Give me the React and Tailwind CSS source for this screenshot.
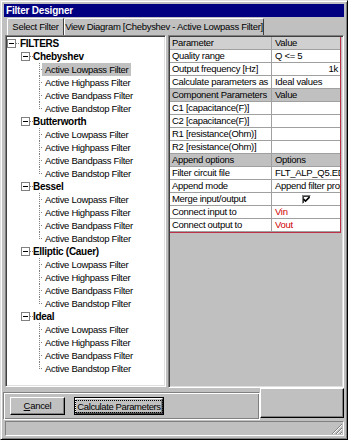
import React from "react";

const groups = ["Chebyshev", "Butterworth", "Bessel", "Elliptic (Cauer)", "Ideal"];
const leaves = ["Active Lowpass Filter", "Active Highpass Filter", "Active Bandpass Filter", "Active Bandstop Filter"];

const rows = [
  { k: "Parameter", v: "Value", head: "top" },
  { k: "Quality range", v: "Q <= 5" },
  { k: "Output frequency [Hz]", v: "1k", right: true },
  { k: "Calculate parameters as", v: "Ideal values" },
  { k: "Component Parameters", v: "Value", head: "sec" },
  { k: "C1 [capacitance(F)]", v: "" },
  { k: "C2 [capacitance(F)]", v: "" },
  { k: "R1 [resistance(Ohm)]", v: "" },
  { k: "R2 [resistance(Ohm)]", v: "" },
  { k: "Append options", v: "Options", head: "sec" },
  { k: "Filter circuit file", v: "FLT_ALP_Q5.EDF" },
  { k: "Append mode", v: "Append filter properties" },
  { k: "Merge input/output", check: true },
  { k: "Connect input to", v: "Vin", red: true },
  { k: "Connect output to", v: "Vout", red: true },
];

function Box() {
  return (
    <span className="flex h-[9px] w-[9px] shrink-0 items-center justify-center border border-[#808080] bg-white">
      <span className="h-px w-[5px] bg-black" />
    </span>
  );
}

function Leaf({ label, last, selected }) {
  return (
    <div className="relative flex h-[13px] items-center pl-[3px]">
      <span className={"absolute left-0 top-0 border-l border-dotted border-[#808080] " + (last ? "h-[7px]" : "h-full")} />
      <span className="absolute left-0 top-[6px] w-[3px] border-t border-dotted border-[#808080]" />
      <span className={"px-[3px] leading-[13px] " + (selected ? "bg-[#c0c0c0]" : "")}>{label}</span>
    </div>
  );
}

function Tree() {
  return (
    <div className="pt-px">
      <div className="flex h-[13px] items-center">
        <Box />
        <span className="w-[3px] border-t border-dotted border-[#808080]" />
        <span className="pl-px font-bold text-[10px]">FILTERS</span>
      </div>
      {groups.map((g, gi) => (
        <div key={g}>
          <div className="flex h-[13px] items-center pl-[14px]">
            <Box />
            <span className="w-[3px] border-t border-dotted border-[#808080]" />
            <span className="font-bold text-[10px]">{g}</span>
          </div>
          <div className="ml-[32px]">
            {leaves.map((l, li) => (
              <Leaf key={l} label={l} last={li === 3} selected={gi === 0 && li === 0} />
            ))}
          </div>
        </div>
      ))}
    </div>
  );
}

function Grid() {
  return (
    <div className="w-[171px] border-r border-b border-[#c03048]">
      {rows.map((r) => {
        const bg = r.head === "top" ? "bg-[#d0d0d0]" : r.head === "sec" ? "bg-[#c0c0c0]" : "bg-white";
        return (
          <div key={r.k} className={"flex h-[13px] border-b border-[#a0a0a0] leading-[12px] " + bg}>
            <div className="w-[102px] shrink-0 overflow-hidden whitespace-nowrap border-r border-[#a0a0a0] pl-[2px]">{r.k}</div>
            <div
              className={
                "flex-1 overflow-hidden whitespace-nowrap pl-[3px] pr-[2px] " +
                (r.right ? "text-right " : "") +
                (r.red ? "text-[#d00000]" : "")
              }
            >
              {r.check ? (
                <div className="flex h-full items-center justify-center">
                  <span className="flex h-[9px] w-[9px] items-center justify-center border-t border-l border-[#808080] border-r border-b border-r-white border-b-white bg-white shadow-[inset_1px_1px_0_#404040]">
                    <svg width="7" height="7" viewBox="0 0 7 7">
                      <path d="M0.5 3 L2.5 5 L6.5 1" stroke="#000" strokeWidth="1.6" fill="none" />
                    </svg>
                  </span>
                </div>
              ) : (
                r.v
              )}
            </div>
          </div>
        );
      })}
    </div>
  );
}

export default function App() {
  return (
    <div className="h-[440px] w-[348px] border border-t-[#dfdfdf] border-l-[#dfdfdf] border-r-black border-b-black bg-[#c0c0c0] px-[3px] pt-[3px] font-['Liberation_Sans',Arial,sans-serif] text-[9.5px] tracking-[-0.3px] text-black shadow-[inset_1px_1px_0_#fff,inset_-1px_-1px_0_#808080]">
      <div className="flex h-[13px] items-center bg-[#000080] pl-[2px] text-[10px] font-bold tracking-[-0.2px] text-white">
        Filter Designer
      </div>

      <div className="flex h-[18px] items-end pl-[3px]">
        <div className="flex h-[17px] w-[57px] items-center justify-center rounded-tl-[2px] border-t border-l border-white border-r border-r-[#404040]">
          Select Filter
        </div>
        <div className="flex h-[17px] w-[200px] items-center justify-center rounded-t-[2px] border-t border-l border-white border-r border-r-[#404040]">
          View Diagram [Chebyshev - Active Lowpass Filter]
        </div>
      </div>

      <div className="flex h-[353px] gap-[2px]">
        <div className="ml-px h-[352px] w-[161px] overflow-hidden border border-t-[#808080] border-l-[#808080] border-r-white border-b-white bg-white pl-px shadow-[inset_1px_1px_0_#404040,inset_-1px_-1px_0_#dfdfdf]">
          <Tree />
        </div>
        <div className="h-[353px] w-[176px] border border-t-[#808080] border-l-[#808080] border-r-white border-b-white p-px shadow-[inset_1px_1px_0_#404040,inset_-1px_-1px_0_#dfdfdf]">
          <Grid />
        </div>
      </div>

      <div className="-ml-px flex h-[32px]">
        <div className="mt-[4px] flex h-[28px] w-[257px] items-start gap-[9px] border border-t-[#808080] border-l-[#808080] border-r-white border-b-white pl-[6px] pt-[4px] shadow-[inset_1px_1px_0_#fff,inset_-1px_-1px_0_#808080]">
          <button className="flex h-[18px] w-[55px] items-center justify-center border border-t-white border-l-white border-r-black border-b-black bg-[#c0c0c0] shadow-[inset_-1px_-1px_0_#808080]">
            <span>
              <span className="underline">C</span>ancel
            </span>
          </button>
          <button className="flex h-[18px] w-[90px] items-center justify-center border border-black bg-[#c0c0c0] p-0">
            <span className="flex h-full w-full items-center justify-center border border-t-white border-l-white border-r-[#404040] border-b-[#404040] shadow-[inset_-1px_-1px_0_#808080]">
              <span className="whitespace-nowrap border border-dotted border-black px-px leading-[11px] tracking-[-0.4px]">
                Calculate Parameters
              </span>
            </span>
          </button>
        </div>
        <div className="mb-[2px] flex-1 border border-t-white border-l-white border-r-black border-b-black shadow-[inset_-1px_-1px_0_#808080]" />
      </div>

      <div className="relative ml-px mt-px h-[15px] w-[339px] border border-t-[#808080] border-l-[#808080] border-r-white border-b-white">
        <svg className="absolute bottom-0 right-0" width="12" height="12" viewBox="0 0 12 12">
          <path d="M11 1 L1 11 M11 5 L5 11 M11 9 L9 11" stroke="#808080" strokeWidth="1" />
          <path d="M11 2 L2 11 M11 6 L6 11 M11 10 L10 11" stroke="#fff" strokeWidth="1" />
        </svg>
      </div>
    </div>
  );
}
